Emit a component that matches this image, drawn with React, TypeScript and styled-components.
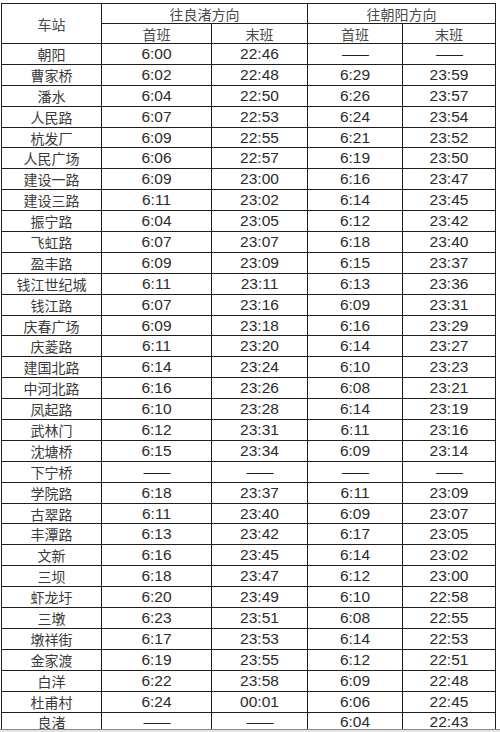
import React from "react";
import styled, { createGlobalStyle } from "styled-components";

const Global = createGlobalStyle`
  html, body { margin: 0; padding: 0; background: #ffffff; }
  body { width: 500px; height: 732px; overflow: hidden; }
`;

const Page = styled.div`
  width: 500px;
  height: 732px;
  display: flex;
  flex-direction: column;
  background: #fff;
`;

const Frame = styled.div`
  height: 729px;
  overflow: hidden;
  padding: 3px 0 0 1px;
  box-sizing: border-box;
`;

const BottomEdge = styled.div`
  height: 3px;
  border-top: 1px solid #8a8a8a;
  background: #e4e4e4;
  box-sizing: border-box;
`;

const Table = styled.table`
  border-collapse: collapse;
  table-layout: fixed;
  width: 494px;
`;

const HeadRow = styled.tr`
  height: 20px;
`;

const Row = styled.tr`
  height: 20.9px;
`;

const Cell = styled.td<{ $cjk?: boolean; $head?: boolean }>`
  border: 1px solid #1e1e1e;
  padding: 0;
  text-align: center;
  vertical-align: middle;
  line-height: 18px;
  white-space: nowrap;
  font-weight: normal;
  font-family: ${(p) =>
    p.$cjk
      ? `"Noto Sans CJK SC", "Liberation Sans", sans-serif`
      : `"Liberation Sans", Arial, sans-serif`};
  font-size: ${(p) => (p.$cjk ? "14px" : "15.5px")};
  color: ${(p) => (p.$head ? "#4a4a4a" : p.$cjk ? "#3a3a3a" : "#2b2b2b")};
`;

const Dash = styled.span`
  font-family: "Liberation Sans", Arial, sans-serif;
  font-size: 14px;
  color: #222;
  letter-spacing: -1px;
`;

type R = [string, string, string, string, string];

const rows: R[] = [
  ["朝阳", "6:00", "22:46", "-", "-"],
  ["曹家桥", "6:02", "22:48", "6:29", "23:59"],
  ["潘水", "6:04", "22:50", "6:26", "23:57"],
  ["人民路", "6:07", "22:53", "6:24", "23:54"],
  ["杭发厂", "6:09", "22:55", "6:21", "23:52"],
  ["人民广场", "6:06", "22:57", "6:19", "23:50"],
  ["建设一路", "6:09", "23:00", "6:16", "23:47"],
  ["建设三路", "6:11", "23:02", "6:14", "23:45"],
  ["振宁路", "6:04", "23:05", "6:12", "23:42"],
  ["飞虹路", "6:07", "23:07", "6:18", "23:40"],
  ["盈丰路", "6:09", "23:09", "6:15", "23:37"],
  ["钱江世纪城", "6:11", "23:11", "6:13", "23:36"],
  ["钱江路", "6:07", "23:16", "6:09", "23:31"],
  ["庆春广场", "6:09", "23:18", "6:16", "23:29"],
  ["庆菱路", "6:11", "23:20", "6:14", "23:27"],
  ["建国北路", "6:14", "23:24", "6:10", "23:23"],
  ["中河北路", "6:16", "23:26", "6:08", "23:21"],
  ["凤起路", "6:10", "23:28", "6:14", "23:19"],
  ["武林门", "6:12", "23:31", "6:11", "23:16"],
  ["沈塘桥", "6:15", "23:34", "6:09", "23:14"],
  ["下宁桥", "-", "-", "-", "-"],
  ["学院路", "6:18", "23:37", "6:11", "23:09"],
  ["古翠路", "6:11", "23:40", "6:09", "23:07"],
  ["丰潭路", "6:13", "23:42", "6:17", "23:05"],
  ["文新", "6:16", "23:45", "6:14", "23:02"],
  ["三坝", "6:18", "23:47", "6:12", "23:00"],
  ["虾龙圩", "6:20", "23:49", "6:10", "22:58"],
  ["三墩", "6:23", "23:51", "6:08", "22:55"],
  ["墩祥街", "6:17", "23:53", "6:14", "22:53"],
  ["金家渡", "6:19", "23:55", "6:12", "22:51"],
  ["白洋", "6:22", "23:58", "6:09", "22:48"],
  ["杜甫村", "6:24", "00:01", "6:06", "22:45"],
  ["良渚", "-", "-", "6:04", "22:43"],
];

const Value: React.FC<{ v: string }> = ({ v }) =>
  v === "-" ? <Dash>——</Dash> : <>{v}</>;

export default function App() {
  return (
    <Page>
      <Global />
      <Frame>
        <Table>
          <colgroup>
            <col style={{ width: 100 }} />
            <col style={{ width: 110 }} />
            <col style={{ width: 96 }} />
            <col style={{ width: 95 }} />
            <col style={{ width: 93 }} />
          </colgroup>
          <thead>
            <HeadRow>
              <Cell as="th" rowSpan={2} $cjk $head>
                车站
              </Cell>
              <Cell as="th" colSpan={2} $cjk $head>
                往良渚方向
              </Cell>
              <Cell as="th" colSpan={2} $cjk $head>
                往朝阳方向
              </Cell>
            </HeadRow>
            <HeadRow>
              <Cell as="th" $cjk $head>首班</Cell>
              <Cell as="th" $cjk $head>末班</Cell>
              <Cell as="th" $cjk $head>首班</Cell>
              <Cell as="th" $cjk $head>末班</Cell>
            </HeadRow>
          </thead>
          <tbody>
            {rows.map((r) => (
              <Row key={r[0]}>
                <Cell $cjk>{r[0]}</Cell>
                <Cell><Value v={r[1]} /></Cell>
                <Cell><Value v={r[2]} /></Cell>
                <Cell><Value v={r[3]} /></Cell>
                <Cell><Value v={r[4]} /></Cell>
              </Row>
            ))}
          </tbody>
        </Table>
      </Frame>
      <BottomEdge />
    </Page>
  );
}
